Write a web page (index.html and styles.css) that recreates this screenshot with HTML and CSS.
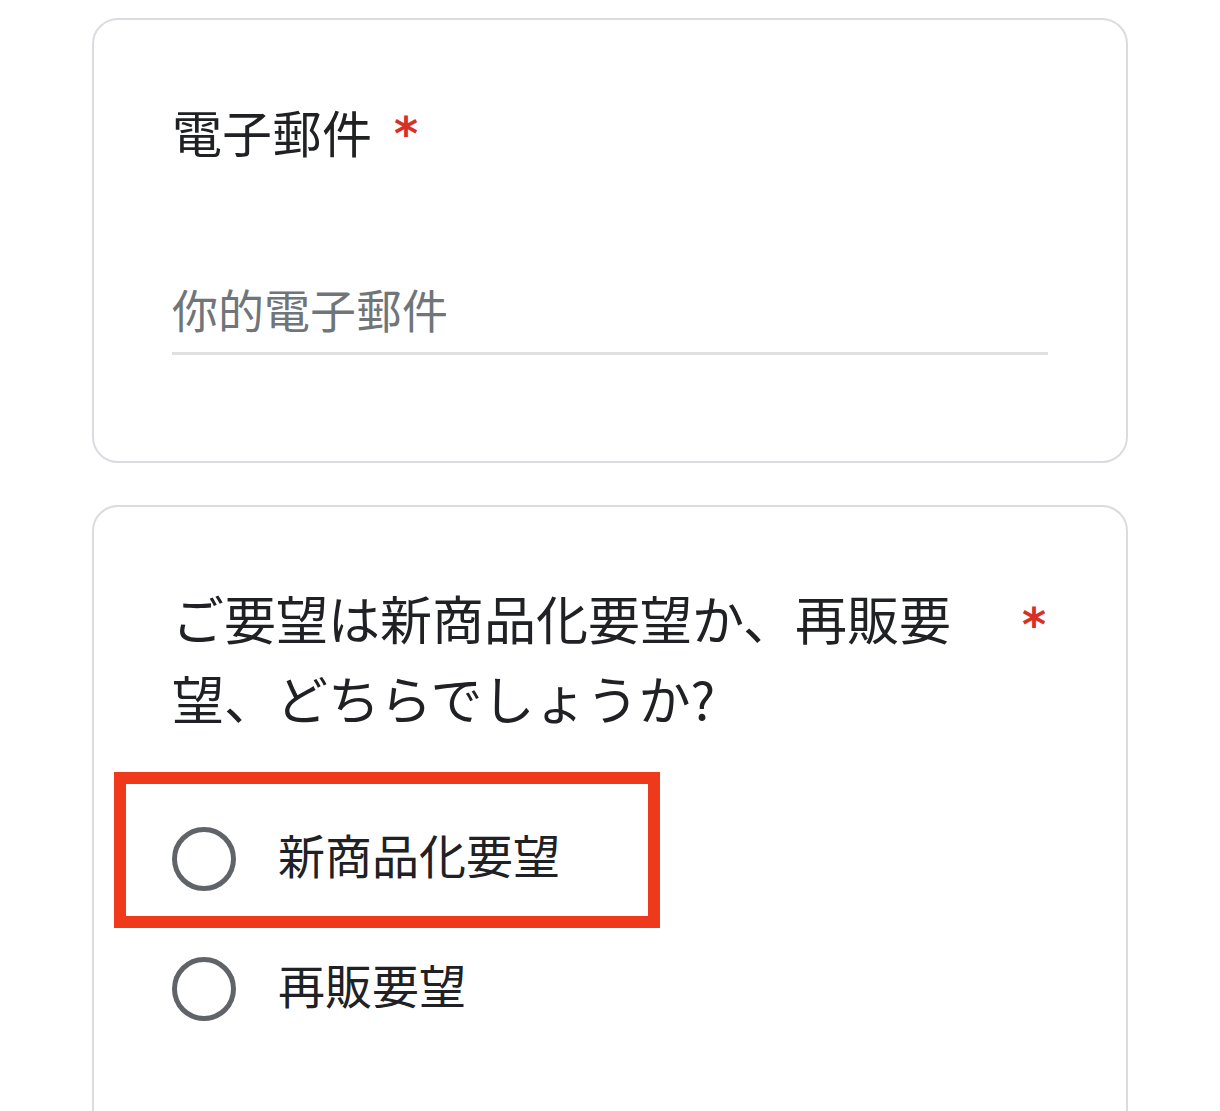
FILE: index.html
```html
<!DOCTYPE html>
<html lang="zh-Hant">
<head>
<meta charset="utf-8">
<title>Form</title>
<link rel="stylesheet" href="styles.css">
</head>
<body>
<main class="form">
  <section class="card card-email">
    <div class="q-title tc">電子郵件<span class="req req-inline">*</span></div>
    <div class="text-input tc">你的電子郵件</div>
  </section>
  <section class="card card-choice">
    <div class="q-row" lang="ja">
      <div class="q-text jp">ご要望は新商品化要望か、再販要望、どちらでしょうか?</div>
      <span class="req">*</span>
    </div>
    <div class="options" lang="ja">
      <div class="option highlighted">
        <span class="radio"></span>
        <span class="opt-label jp">新商品化要望</span>
        <span class="mark"></span>
      </div>
      <div class="option">
        <span class="radio"></span>
        <span class="opt-label jp">再販要望</span>
      </div>
    </div>
  </section>
</main>
</body>
</html>
```

FILE: styles.css
```css
html, body {
  margin: 0;
  padding: 0;
  background: #ffffff;
}
body {
  font-family: "Noto Sans CJK TC", "Noto Sans", sans-serif;
  color: #202124;
}
.tc { font-family: "Noto Sans CJK TC", "Noto Sans", sans-serif; }
.jp { font-family: "Noto Sans CJK JP", "Noto Sans", sans-serif; }

.form {
  width: 1036px;
  margin: 18px 0 0 92px;
  display: flex;
  flex-direction: column;
  gap: 42px;
}
.card {
  box-sizing: border-box;
  border: 2px solid #dadce0;
  border-radius: 26px;
  background: #fff;
  padding: 0 78px;
  position: relative;
}
.card-email {
  height: 445px;
  padding-top: 77px;
}
.q-title {
  font-size: 50px;
  line-height: 68px;
  color: #202124;
  display: flex;
  align-items: flex-start;
}
.req {
  color: #d93025;
  font-family: "DejaVu Sans", "Liberation Sans", sans-serif;
  font-size: 46px;
  font-weight: bold;
  line-height: 1;
}
.req-inline {
  margin-left: 22px;
  margin-top: 14px;
}
.text-input {
  margin-top: 113px;
  font-size: 46px;
  line-height: 60px;
  color: #70757a;
  padding-bottom: 14px;
  border-bottom: 3px solid #e0e0e0;
}

.card-choice {
  padding-top: 71px;
  padding-bottom: 120px;
  border-bottom-left-radius: 0;
  border-bottom-right-radius: 0;
}
.q-row {
  display: flex;
  align-items: flex-start;
  justify-content: space-between;
  gap: 24px;
}
.q-text {
  font-size: 52px;
  line-height: 80px;
  width: 800px;
  color: #202124;
}
.q-row .req {
  margin-top: 24px;
  margin-right: 2px;
}
.options {
  margin-top: 56px;
  display: flex;
  flex-direction: column;
}
.option {
  height: 130px;
  display: flex;
  align-items: center;
  gap: 42px;
  position: relative;
}
.radio {
  box-sizing: border-box;
  width: 64px;
  height: 64px;
  border: 5px solid #606368;
  border-radius: 50%;
  flex: none;
}
.opt-label {
  font-size: 47px;
  line-height: 60px;
  padding-bottom: 10px;
  color: #202124;
}
.mark {
  position: absolute;
  left: -58px;
  top: -22px;
  width: 546px;
  height: 156px;
  box-sizing: border-box;
  border: 12px solid #ee3a1a;
  pointer-events: none;
}
```
